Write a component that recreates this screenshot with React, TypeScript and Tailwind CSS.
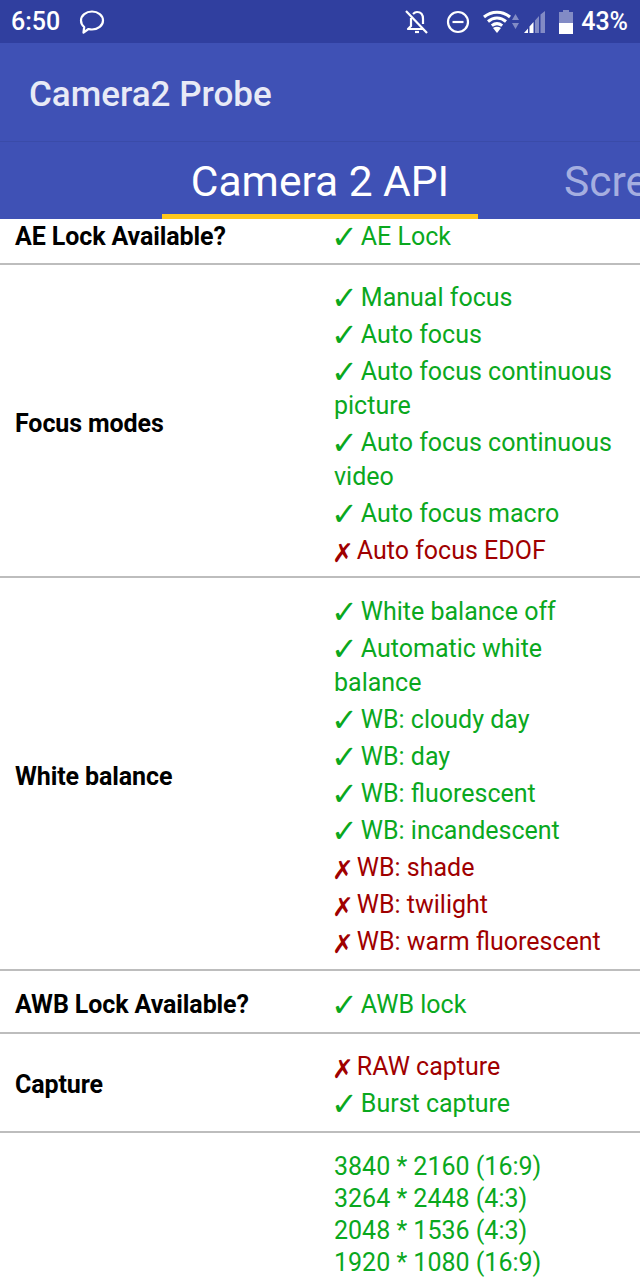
const Ok = ({ children }: { children: React.ReactNode }) => (
  <div className="text-[#0aa81e] pb-[3px]">
    <span className="font-['DejaVu_Sans'] text-[32px] leading-none align-[-3px] -ml-[3px] mr-[3px]">✓</span>
    {children}
  </div>
);
const No = ({ children }: { children: React.ReactNode }) => (
  <div className="text-[#a00000] pb-[3px]">
    <span className="font-['DejaVu_Sans'] text-[26px] leading-none align-[-3px] -ml-[2px] mr-[3px]">✗</span>
    {children}
  </div>
);
const Row = ({ label, cls, valueCls, children }: { label: string; cls: string; valueCls: string; children: React.ReactNode }) => (
  <div className={`flex items-center border-b-2 border-[#bdbdbd] pl-[15px] ${cls}`}>
    <div className="w-[319px] shrink-0 font-bold text-[25px] tracking-[-0.1px] text-black">{label}</div>
    <div className={`flex-1 pr-[20px] text-[25px] leading-[34px] ${valueCls}`}>{children}</div>
  </div>
);
const Size = ({ t }: { t: string }) => <div className="text-[#0aa81e] leading-[32px]">{t}</div>;

export default function App() {
  return (
    <div className="w-[640px] h-[1280px] overflow-hidden bg-white font-['Roboto',sans-serif] flex flex-col">
      <div className="h-[43px] bg-[#303f9f] flex items-center shrink-0 text-white pl-[11px] pr-[12px]">
        <span className="text-[25px] font-medium">6:50</span>
        <svg className="ml-[19px]" width="26" height="26" viewBox="0 0 26 26" fill="none" stroke="white" strokeWidth="2.2">
          <path d="M2 11.5C2 6.5 7 2.5 13 2.5s11 4 11 9-5 9-11 9c-1.5 0-2.6-.2-3.5-.5L4.5 23.5l.7-5.5C3.300 16.500 2 14.200 2 11.500z" strokeLinejoin="round" />
        </svg>
        <div className="flex-1" />
        <svg width="24" height="26" viewBox="0 0 24 26" fill="none" stroke="white" strokeWidth="2.2" className="mr-[17px]">
          <path d="M1 2l21 22" />
          <path d="M6 9v8l-3 3h15M8 5c1-1 2.500-2 4-2 4 0 6 3 6 7v5" strokeLinejoin="round" />
          <path d="M10 23h4" />
        </svg>
        <svg width="24" height="24" viewBox="0 0 24 24" fill="none" stroke="white" strokeWidth="2.2" className="mr-[13px]">
          <circle cx="12" cy="12" r="10" />
          <path d="M6.500 12h11" />
        </svg>
        <svg width="28" height="24" viewBox="0 0 28 24" fill="none" stroke="white" strokeWidth="3">
          <path d="M1 7c7.500-6.500 18.500-6.500 26 0M5 11.500c5.500-4.700 12.500-4.700 18 0M8.800 15.700c3.200-2.600 7.200-2.600 10.400 0" />
          <path d="M14 23l-4-5c2.400-1.700 5.600-1.700 8 0z" fill="white" stroke="none" />
        </svg>
        <svg width="7" height="15" viewBox="0 0 7 15" fill="white" fillOpacity="0.4" className="ml-[1px] mr-[5px]">
          <path d="M3.500 0l3.500 6H0zM0 9h7l-3.500 6z" />
        </svg>
        <svg width="21" height="22" viewBox="0 0 21 22" className="mr-[14px]">
          <path d="M0 22l4-4.500V22zM5.500 22v-6.500l4-4.500v11z" fill="white" />
          <path d="M11 22V9.500l4-4.500v17zM16.500 22V3.500L21 0v22z" fill="white" fillOpacity="0.4" />
        </svg>
        <svg width="14" height="24" viewBox="0 0 14 24" className="mr-[8px]">
          <path d="M4 0h6v2h4v22H0V2h4z" fill="white" fillOpacity="0.4" />
          <path d="M0 13h14v11H0z" fill="white" />
        </svg>
        <span className="text-[25px] font-medium">43%</span>
      </div>
      <div className="h-[99px] bg-[#3f51b5] flex items-center shrink-0 pl-[29px] pt-[7px] border-b border-[#3a4ba8]">
        <span className="text-[35px] font-medium text-[#e8eaf6]">Camera2 Probe</span>
      </div>
      <div className="h-[77px] bg-[#3f51b5] shrink-0 flex relative overflow-hidden pl-[162px]">
        <div className="w-[316px] shrink-0 h-full border-b-[5px] border-[#ffc71c] flex items-center justify-center text-white text-[42.5px] pt-[7px]">
          Camera 2 API
        </div>
        <div className="ml-[86px] shrink-0 h-full flex items-center pb-[5px] pt-[7px] text-[#a5aee0] text-[42.5px]">Screen</div>
      </div>
      <div className="flex-1 overflow-hidden">
        <Row label="AE Lock Available?" cls="h-[46px] pb-[8px]" valueCls="pt-[2px]">
          <Ok>AE Lock</Ok>
        </Row>
        <Row label="Focus modes" cls="h-[313px] pt-[6px]" valueCls="pt-[4px]">
          <Ok>Manual focus</Ok>
          <Ok>Auto focus</Ok>
          <Ok>Auto focus continuous picture</Ok>
          <Ok>Auto focus continuous video</Ok>
          <Ok>Auto focus macro</Ok>
          <No>Auto focus EDOF</No>
        </Row>
        <Row label="White balance" cls="h-[393px] pt-[6px]" valueCls="pt-[4px]">
          <Ok>White balance off</Ok>
          <Ok>Automatic white balance</Ok>
          <Ok>WB: cloudy day</Ok>
          <Ok>WB: day</Ok>
          <Ok>WB: fluorescent</Ok>
          <Ok>WB: incandescent</Ok>
          <No>WB: shade</No>
          <No>WB: twilight</No>
          <No>WB: warm fluorescent</No>
        </Row>
        <Row label="AWB Lock Available?" cls="h-[63px] pt-[6px]" valueCls="pt-[4px]">
          <Ok>AWB lock</Ok>
        </Row>
        <Row label="Capture" cls="h-[99px] pt-[4px]" valueCls="pt-[4px]">
          <No>RAW capture</No>
          <Ok>Burst capture</Ok>
        </Row>
        <div className="pl-[334px] pt-[18px] text-[25px]">
          <Size t="3840 * 2160 (16:9)" />
          <Size t="3264 * 2448 (4:3)" />
          <Size t="2048 * 1536 (4:3)" />
          <Size t="1920 * 1080 (16:9)" />
        </div>
      </div>
    </div>
  );
}
